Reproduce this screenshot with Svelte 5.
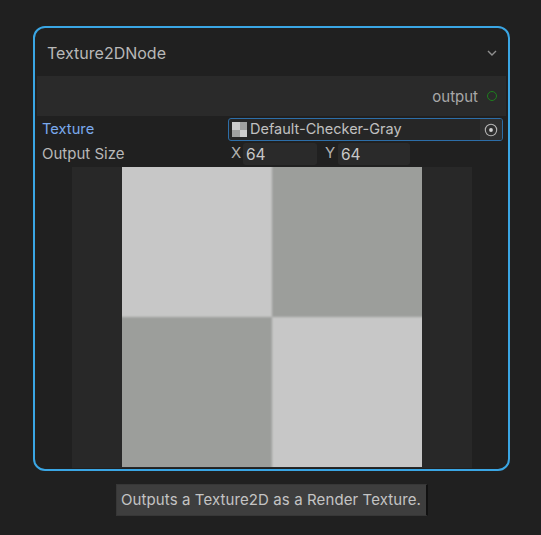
<script lang="ts">
  const tiles = ["light", "dark", "dark", "light"];
</script>

<div class="page">
  <div class="node">
    <div class="title">
      <span>Texture2DNode</span>
      <svg class="chevron" width="10" height="6" viewBox="0 0 10 6">
        <path d="M1 1l4 4 4-4" fill="none" stroke="#8f8f8f" stroke-width="1.4" />
      </svg>
    </div>
    <div class="ports">
      <span>output</span>
      <i class="port"></i>
    </div>
    <div class="rows">
      <div class="row">
        <span class="label active">Texture</span>
        <div class="object-field">
          <span class="thumb">
            <i></i><i></i><i></i><i></i>
          </span>
          <span class="object-name">Default-Checker-Gray</span>
          <span class="picker">
            <svg width="14" height="14" viewBox="0 0 14 14">
              <circle cx="7" cy="7" r="5.7" fill="none" stroke="#b4b4b4" stroke-width="1.1" />
              <circle cx="7" cy="7" r="1.9" fill="#d2d2d2" />
            </svg>
          </span>
        </div>
      </div>
      <div class="row size">
        <span class="label">Output Size</span>
        <div class="vector">
          <span class="axis">X</span>
          <span class="number">64</span>
          <span class="axis y">Y</span>
          <span class="number short">64</span>
        </div>
      </div>
    </div>
    <div class="preview">
      <div class="checker">
        <div class="tiles">
          {#each tiles as tile}
            <div class={tile}></div>
          {/each}
        </div>
      </div>
    </div>
  </div>
  <div class="tooltip">Outputs a Texture2D as a Render Texture.</div>
</div>

<style>
  :global(body) {
    background: #202020;
  }
  .page {
    width: 541px;
    height: 535px;
    box-sizing: border-box;
    padding: 26px 31px 0 33px;
    background: #202020;
    font-family: Inter, "Noto Sans", sans-serif;
    color: #c2c2c2;
    overflow: hidden;
  }
  .node {
    box-sizing: border-box;
    height: 445px;
    padding-bottom: 1px;
    border: 2px solid #3aa6e4;
    border-radius: 12px;
    display: flex;
    flex-direction: column;
    overflow: hidden;
  }
  .title {
    height: 48px;
    flex: none;
    box-sizing: border-box;
    padding: 2px 11px 0 12px;
    display: flex;
    align-items: center;
    justify-content: space-between;
    font-size: 16px;
    color: #b8b8b8;
  }
  .ports {
    height: 40px;
    flex: none;
    margin: 0 2px;
    box-sizing: border-box;
    padding-right: 9px;
    background: #2a2a2a;
    display: flex;
    align-items: center;
    justify-content: flex-end;
    gap: 9px;
    font-size: 15px;
    color: #a8a8a8;
  }
  .port {
    width: 8px;
    height: 8px;
    border: 1.3px solid #1d7f1d;
    border-radius: 50%;
  }
  .rows {
    flex: none;
    height: 51px;
    padding: 2px 5px 0 7px;
    box-sizing: border-box;
    display: flex;
    flex-direction: column;
  }
  .row {
    display: grid;
    grid-template-columns: 186px 1fr;
    align-items: center;
    font-size: 15px;
  }
  .label {
    color: #b8b8b8;
    padding-bottom: 2px;
  }
  .label.active {
    color: #7aa9ec;
    font-size: 14.7px;
  }
  .object-field {
    height: 23px;
    box-sizing: border-box;
    border: 1px solid #2d6ea8;
    border-radius: 3px;
    display: flex;
    align-items: center;
    background: #262626;
    padding-left: 3px;
    overflow: hidden;
  }
  .thumb {
    width: 15px;
    height: 15px;
    display: grid;
    grid-template-columns: 1fr 1fr;
    grid-template-rows: 1fr 1fr;
    flex: none;
    margin-right: 3px;
  }
  .thumb i:nth-child(1),
  .thumb i:nth-child(4) {
    background: #cdcdcd;
  }
  .thumb i:nth-child(2),
  .thumb i:nth-child(3) {
    background: #a0a1a0;
  }
  .object-name {
    flex: 1;
    font-size: 14.5px;
    color: #c0c0c0;
    padding-bottom: 2px;
  }
  .picker {
    width: 22px;
    align-self: stretch;
    background: #2f2f2f;
    display: flex;
    align-items: center;
    justify-content: center;
  }
  .size {
    margin-top: 2px;
  }
  .vector {
    display: flex;
    align-items: center;
    height: 22px;
    padding-left: 3px;
  }
  .axis {
    width: 12px;
    flex: none;
    color: #b0b0b0;
    font-size: 15px;
    padding-bottom: 3px;
  }
  .axis.y {
    margin-left: 8px;
    width: 13px;
  }
  .number {
    width: 74px;
    height: 22px;
    box-sizing: border-box;
    background: #2a2a2a;
    border-radius: 3px;
    padding: 2px 0 0 3px;
    font-size: 15.5px;
    line-height: 20px;
    color: #c8c8c8;
  }
  .number.short {
    width: 72px;
  }
  .preview {
    flex: 1;
    min-height: 0;
    margin: 0 36px 0 37px;
    background: #282828;
    display: flex;
    justify-content: center;
  }
  .checker {
    width: 300px;
    height: 300px;
    flex: none;
    overflow: hidden;
    margin-left: -1px;
  }
  .tiles {
    width: 312px;
    height: 312px;
    margin: -6px;
    display: grid;
    grid-template-columns: 1fr 1fr;
    grid-template-rows: 1fr 1fr;
    filter: blur(1.2px);
  }
  .light {
    background: #c7c7c7;
  }
  .dark {
    background: #9c9e9b;
  }
  .tooltip {
    width: 312px;
    height: 32px;
    box-sizing: border-box;
    margin: 13px 0 0 83px;
    background: #3e3e3e;
    border: 1px solid #373737;
    border-right: 2px solid #111;
    font-size: 15px;
    letter-spacing: 0.1px;
    line-height: 29px;
    padding-left: 4px;
    white-space: nowrap;
    color: #c4c4c4;
  }
</style>
